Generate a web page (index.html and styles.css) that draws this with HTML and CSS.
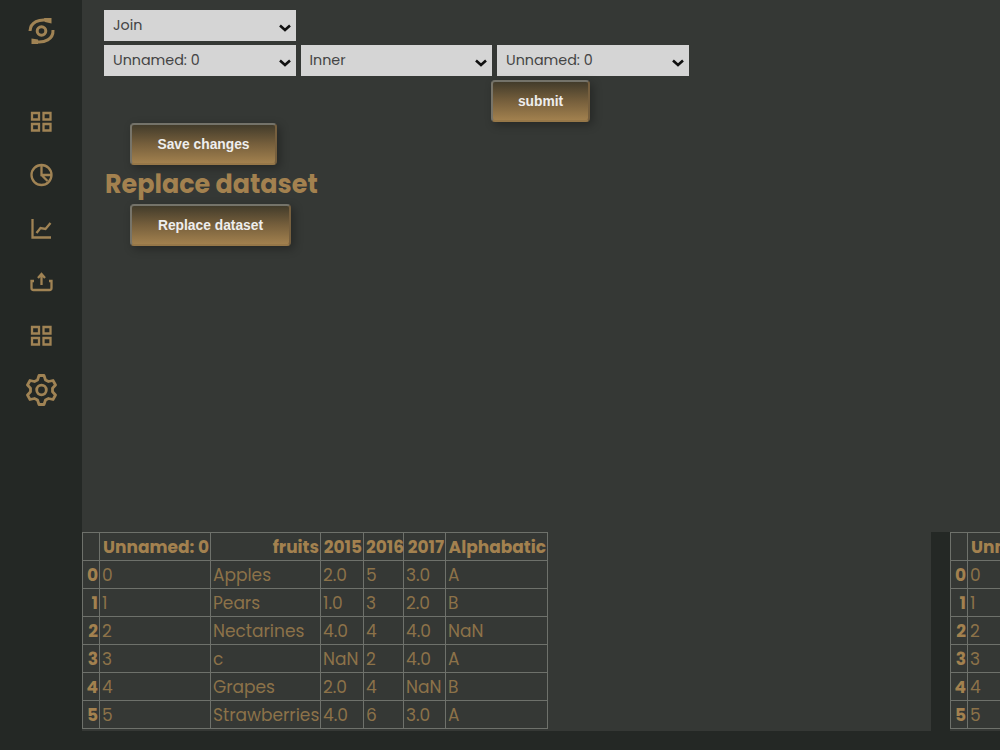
FILE: index.html
```html
<!DOCTYPE html>
<html lang="en">
<head>
  <meta charset="UTF-8">
  <title>Join datasets</title>
  <link rel="stylesheet" href="styles.css">
</head>
<body>

  <nav class="sidebar">
    <a class="logo"><svg width="30" height="30" viewBox="0 0 30 30"><circle cx="15.500" cy="15" r="4.300"/><path d="M4 15C4.500 6 13 2.500 23 4.500M27 14C27.500 23 19 27.500 8 25.500"/><path class="dot" d="M18 2h7.500v5.500L19 6zM5.500 22.500l6.500 1v4.500H5.500z"/></svg></a>
    <a><svg width="24" height="24" viewBox="0 0 24 24"><path d="M3 3h7v6.500H3zM14.500 3h7v6.500h-7zM3 14h7v6.500H3zM14.500 14h7v6.500h-7z"/></svg></a>
    <a><svg width="24" height="24" viewBox="0 0 24 24"><circle cx="12.500" cy="12" r="10"/><path d="M12.500 2v10h10M12.500 12l6 6"/></svg></a>
    <a><svg width="24" height="24" viewBox="0 0 24 24"><path d="M3.500 2v18.500H22M7.500 16l4-5 5 1 5-6"/></svg></a>
    <a><svg width="24" height="24" viewBox="0 0 24 24"><path d="M5 11H2.500v7q0 2 2 2h16q2 0 2-2v-7H20M12.500 15V5M9 8l3.500-4L16 8"/></svg></a>
    <a><svg width="24" height="24" viewBox="0 0 24 24"><path d="M3 3h7v6.500H3zM14.500 3h7v6.500h-7zM3 14h7v6.500H3zM14.500 14h7v6.500h-7z"/></svg></a>
    <a class="settings"><svg width="32" height="34" viewBox="0 0 32 34"><circle cx="16.500" cy="18" r="4.800"/><path d="M14 3.500h5l1.500 4.500 3 1.500 4.500-1 2.500 4.500-3 3.200v3.600l3 3.200-2.500 4.500-4.500-1-3 1.500-1.500 4.500h-5L12.500 28l-3-1.500-4.500 1L2.500 23l3-3.200v-3.600l-3-3.200L5 8.500l4.500 1 3-1.500z"/></svg></a>
  </nav>

  <main>
    <form class="options">
      <div class="row">
        <div class="select">Join<svg width="12" height="8" viewBox="0 0 12 8"><path d="M1 1.500l5 4.500 5-4.500"/></svg></div>
      </div>
      <div class="row">
        <div class="select">Unnamed: 0<svg width="12" height="8" viewBox="0 0 12 8"><path d="M1 1.500l5 4.500 5-4.500"/></svg></div>
        <div class="select">Inner<svg width="12" height="8" viewBox="0 0 12 8"><path d="M1 1.500l5 4.500 5-4.500"/></svg></div>
        <div class="select">Unnamed: 0<svg width="12" height="8" viewBox="0 0 12 8"><path d="M1 1.500l5 4.500 5-4.500"/></svg></div>
      </div>
      <button type="button" class="btn submit">submit</button>
      <button type="button" class="btn save">Save changes</button>
      <h2>Replace dataset</h2>
      <button type="button" class="btn replace">Replace dataset</button>
    </form>

    <div class="tables">
      <div class="panel"></div>
      <div class="panel"></div>
    </div>
  </main>

  <script>
    const columns = ['', 'Unnamed: 0', 'fruits', '2015', '2016', '2017', 'Alphabatic'];
    const widths = [17, 111, 110, 43, 40, 42, 102];
    const rows = [
      ['0', '0', 'Apples', '2.0', '5', '3.0', 'A'],
      ['1', '1', 'Pears', '1.0', '3', '2.0', 'B'],
      ['2', '2', 'Nectarines', '4.0', '4', '4.0', 'NaN'],
      ['3', '3', 'c', 'NaN', '2', '4.0', 'A'],
      ['4', '4', 'Grapes', '2.0', '4', 'NaN', 'B'],
      ['5', '5', 'Strawberries', '4.0', '6', '3.0', 'A']
    ];

    const table = '<table><colgroup>' + widths.map(w => `<col style="width:${w}px">`).join('') + '</colgroup>' +
      '<tr>' + columns.map(c => `<th>${c}</th>`).join('') + '</tr>' +
      rows.map(r => '<tr>' + r.map((v, i) => i ? `<td>${v}</td>` : `<th>${v}</th>`).join('') + '</tr>').join('') +
      '</table>';

    document.querySelectorAll('.panel').forEach(panel => {
      panel.innerHTML = table;
    });
  </script>
</body>
</html>
```
FILE: styles.css
```css
* {
  box-sizing: border-box;
}
body {
  margin: 0;
  width: 1000px;
  height: 750px;
  display: flex;
  overflow: hidden;
  background: #242825;
  color: #a3814f;
  font-family: Poppins, Inter, sans-serif;
}
.sidebar {
  width: 82px;
  flex: none;
  display: flex;
  flex-direction: column;
  align-items: center;
  padding-top: 4px;
}
.sidebar a {
  display: flex;
  align-items: center;
  justify-content: center;
  height: 53.500px;
}
.sidebar .logo {
  height: 54px;
  margin-bottom: 37px;
}
svg {
  fill: none;
  stroke: #a08354;
  stroke-width: 2.300;
}
.sidebar .logo svg {
  stroke-width: 3;
}
.sidebar .settings svg {
  stroke-width: 2.800;
  stroke-linejoin: round;
}
.sidebar .dot {
  fill: #a08354;
  stroke: none;
}
main {
  width: 918px;
  display: flex;
  flex-direction: column;
  overflow: hidden;
}
.options {
  height: 532px;
  flex: none;
  background: #353835;
  padding: 10px 0 0 22px;
  display: flex;
  flex-direction: column;
  align-items: flex-start;
}
.row {
  display: flex;
  gap: 5px;
  margin-bottom: 4px;
}
.select {
  width: 191.500px;
  height: 31px;
  padding: 0 5px 0 9px;
  background: #d5d5d5;
  color: #444;
  display: flex;
  align-items: center;
  justify-content: space-between;
  font-size: 14.300px;
}
.select svg {
  stroke: #111;
  stroke-width: 2.600;
  margin-top: 5px;
}
.btn {
  height: 42px;
  border: 2px solid;
  border-color: #74736a #765f3e #967748 #777469;
  border-radius: 4px;
  background: linear-gradient(#3d3829, #765f3c 50%, #a68450);
  background-origin: border-box;
  box-shadow: 3px 3px 10px rgba(0, 0, 0, 0.300);
  color: #eee;
  font: bold 13.800px "Liberation Sans", sans-serif;
  padding: 0;
}
.submit {
  width: 99px;
  margin-left: 387px;
}
.save {
  width: 147px;
  margin: 1px 0 0 26px;
}
h2 {
  margin: 0 0 0 1px;
  height: 39px;
  line-height: 39px;
  font-size: 25.400px;
}
.replace {
  width: 161px;
  margin-left: 26px;
}
.tables {
  display: flex;
  gap: 19px;
}
.panel {
  width: 849px;
  height: 199px;
  flex: none;
  background: #353835;
}
table {
  width: 465px;
  table-layout: fixed;
  border-collapse: collapse;
  font-size: 17px;
}
tr {
  height: 28px;
}
td, th {
  border: 1px solid #6e716b;
  padding: 1px 0 0 2px;
  line-height: 26px;
  white-space: nowrap;
}
td {
  color: #8c7249;
}
th {
  text-align: right;
  padding-right: 1px;
}
```
